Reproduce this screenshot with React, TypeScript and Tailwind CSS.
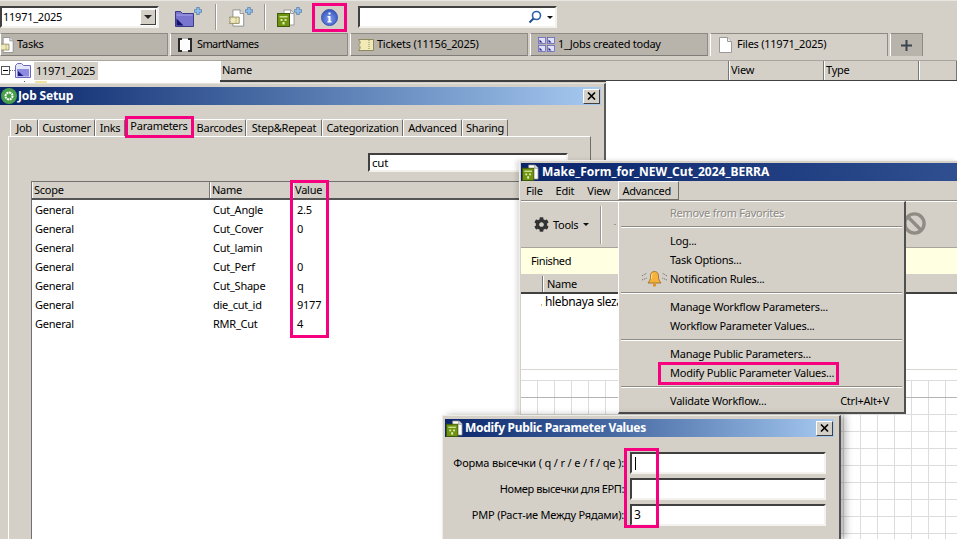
import { FaCog } from "react-icons/fa";

const raised = "border border-t-white border-l-white border-r-[#6f6d68] border-b-[#6f6d68]";
const sunken = "border-2 border-t-[#404040] border-l-[#404040] border-r-[#f4f2ee] border-b-[#f4f2ee]";
const titleText = "font-bold text-white text-[12px] whitespace-nowrap";

function GreenIcon({ className = "" }: { className?: string }) {
  return (
    <svg viewBox="0 0 18 18" className={className}>
      <path d="M7 1h7l3 3v12H7z" fill="#fff" stroke="#8a8a8a" strokeWidth="0.8" />
      <path d="M13.500 1v3.500H17" fill="#e6e6e6" stroke="#8a8a8a" strokeWidth="0.8" />
      <rect x="0.500" y="4.500" width="12" height="13" fill="#6f9412" stroke="#41590a" />
      <path d="M2.500 7h8v1.500h-8z" fill="#cfe090" />
      <rect x="3.500" y="10" width="2" height="2" fill="#d8e8a0" />
      <rect x="7.500" y="10" width="2" height="2" fill="#d8e8a0" />
      <rect x="5.500" y="13" width="2" height="2.500" fill="#e8f0c0" />
    </svg>
  );
}

function Plus({ className = "" }: { className?: string }) {
  return (
    <svg viewBox="0 0 9 9" className={className}>
      <path d="M3 0.400h3v2.600h2.600v3H6v2.600H3V6H0.400V3H3z" fill="#8fbce8" stroke="#3f6f9f" strokeWidth="0.7" />
    </svg>
  );
}

function FolderPlus() {
  return (
    <div className="relative w-[27px] h-[20px]">
      <svg viewBox="0 0 19 16" className="absolute left-0 bottom-0 w-[19px] h-[16px]">
        <path d="M0.500 0.500h5l2 2h11v13h-18z" fill="#7a76d0" stroke="#3d3a86" />
        <path d="M1.500 4h16" stroke="#a6a3ea" />
        <path d="M1.500 14.500V7.500l7 7z" fill="#14126a" />
      </svg>
      <Plus className="absolute right-0 top-0 w-[8px] h-[8px]" />
    </div>
  );
}

function TicketDoc({ className = "" }: { className?: string }) {
  return (
    <svg viewBox="0 0 18 20" className={className}>
      <path d="M5 1h8l4 4v14H5z" fill="#fff" stroke="#8a8a8a" />
      <path d="M13 1v4h4" fill="#e8e8e8" stroke="#8a8a8a" />
      <path d="M1 9h11v7H1l1-1.700v-1l-1-.8 1-.8v-1z" fill="#efe8b8" stroke="#8e8a60" />
      <path d="M8.500 10v5" stroke="#8e8a60" strokeDasharray="1 1" />
    </svg>
  );
}

function Ticket({ className = "" }: { className?: string }) {
  return (
    <svg viewBox="0 0 16 12" className={className}>
      <path d="M0.500 0.500h15v11h-15l1.500-2v-2l-1.500-1.500 1.500-1.500v-2z" fill="#f1eab6" stroke="#8e8a60" />
      <path d="M11 1v10" stroke="#8e8a60" strokeDasharray="1 1" />
    </svg>
  );
}

function JobsGrid({ className = "" }: { className?: string }) {
  const tile = (x: number, y: number) => (
    <g key={`${x}-${y}`}>
      <rect x={x} y={y} width="7" height="6" fill="#dfe2f6" stroke="#5a58b8" strokeWidth="0.7" />
      <path d={`M${x + 1} ${y + 5}v-3l3 3z`} fill="#24209a" />
    </g>
  );
  return (
    <svg viewBox="0 0 17 15" className={className}>
      {tile(0.5, 0.5)}
      {tile(9.5, 0.5)}
      {tile(0.5, 8.5)}
      {tile(9.5, 8.5)}
    </svg>
  );
}

const tabs = [
  { label: "Tasks", w: "w-[168px]", text: "", icon: <TicketDoc className="w-[15px] h-[18px] -ml-[2px] mr-[3px]" />, pl: "pl-0" },
  { label: "SmartNames", w: "w-[178px]", text: "tracking-[-0.6px]", icon: <svg viewBox="0 0 14 14" className="w-[14px] h-[14px] mr-[5px]"><rect x="1" y="1" width="12" height="12" fill="#fdfdfd" /><path d="M4 1H1v12h3M10 1h3v12h-3" fill="none" stroke="#2a2a2a" strokeWidth="2" /></svg>, pl: "pl-[7px]" },
  { label: "Tickets (11156_2025)", w: "w-[178px]", text: "", icon: <Ticket className="w-[16px] h-[12px] mr-[3px]" />, pl: "pl-[7px]" },
  { label: "1_Jobs created today", w: "w-[178px]", text: "", icon: <JobsGrid className="w-[17px] h-[15px] mr-[3px]" />, pl: "pl-[7px]" },
];

const headerCols = [
  { label: "Name", w: "w-[509px]" },
  { label: "View", w: "w-[95px]" },
  { label: "Type", w: "w-[95px]" },
  { label: "", w: "flex-1" },
];

const jobTabs = [
  { label: "Job", w: "w-[28px]" },
  { label: "Customer", w: "w-[57px]" },
  { label: "Inks", w: "w-[30px]" },
  { label: "Parameters", w: "w-[68px]", active: true },
  { label: "Barcodes", w: "w-[53px]" },
  { label: "Step&Repeat", w: "w-[76px]" },
  { label: "Categorization", w: "w-[81px]" },
  { label: "Advanced", w: "w-[59px]" },
  { label: "Sharing", w: "w-[46px]" },
];

const params = [
  ["General", "Cut_Angle", "2.5"],
  ["General", "Cut_Cover", "0"],
  ["General", "Cut_lamin", ""],
  ["General", "Cut_Perf", "0"],
  ["General", "Cut_Shape", "q"],
  ["General", "die_cut_id", "9177"],
  ["General", "RMR_Cut", "4"],
];

type MenuEntry = { label?: string; disabled?: boolean; bell?: boolean; shortcut?: string; sep?: boolean };
const menu: MenuEntry[] = [
  { label: "Remove from Favorites", disabled: true },
  { sep: true },
  { label: "Log..." },
  { label: "Task Options..." },
  { label: "Notification Rules...", bell: true },
  { sep: true },
  { label: "Manage Workflow Parameters..." },
  { label: "Workflow Parameter Values..." },
  { sep: true },
  { label: "Manage Public Parameters..." },
  { label: "Modify Public Parameter Values..." },
  { sep: true },
  { label: "Validate Workflow...", shortcut: "Ctrl+Alt+V" },
];

const formFields = [
  { label: "Форма высечки ( q / r / e / f / qe ):", value: "", caret: true, text: "tracking-[-0.15px]" },
  { label: "Номер высечки для ЕРП:", value: "", text: "tracking-[-0.4px]" },
  { label: "РМР (Раст-ие Между Рядами):", value: "3", text: "tracking-[-0.22px]" },
];

function CloseBtn() {
  return (
    <div className={`w-[17px] h-[15px] bg-[#d4d0c8] flex items-center justify-center ${raised} border-r-[#404040] border-b-[#404040]`}>
      <svg viewBox="0 0 9 8" className="w-[9px] h-[8px]">
        <path d="M1 0.500l7 7M8 0.500l-7 7" stroke="#000" strokeWidth="1.600" />
      </svg>
    </div>
  );
}

function Bell() {
  return (
    <svg viewBox="0 0 27 16" className="w-[27px] h-[16px]">
      <path d="M13.500 0.500c-3.500 0-4 3-4 5.500s-1 4-2.500 6h13c-1.500-2-2.500-3.500-2.500-6s-.5-5.500-4-5.500z" fill="#f6b23c" stroke="#8a5a10" strokeWidth="0.7" />
      <path d="M11.500 2.500c-1 1-.8 3-1 5" stroke="#ffe9a8" fill="none" />
      <circle cx="13.500" cy="14" r="1.700" fill="#e0902a" />
      <path d="M1 5l5-3M1 9l5-2M26 5l-5-3M26 9l-5-2" stroke="#444" strokeWidth="0.8" strokeDasharray="1 1" fill="none" />
    </svg>
  );
}

export default function App() {
  return (
    <div className="relative w-[957px] h-[539px] overflow-hidden bg-[#d4d0c8] text-black text-[11px] tracking-[-0.25px] leading-[14px] font-['Noto_Sans',sans-serif]">
      {/* Main toolbar */}
      <div className="h-[33px] flex items-center border-t border-[#e8e6e0]">
        <div className={`w-[159px] h-[22px] bg-white flex items-center justify-between pl-[1px] pr-[1px] ${sunken}`}>
          <span>11971_2025</span>
          <div className={`w-[16px] h-[16px] bg-[#d4d0c8] flex items-center justify-center ${raised} border-r-[#404040] border-b-[#404040]`}>
            <svg viewBox="0 0 8 4" className="w-[8px] h-[4px]"><path d="M0 0h8L4 4z" fill="#222" /></svg>
          </div>
        </div>
        <div className="ml-[16px]"><FolderPlus /></div>
        <div className="ml-[13px] w-[2px] h-[26px] border-l border-l-[#9a9790] border-r border-r-white" />
        <div className="ml-[11px] relative w-[25px] h-[20px]">
          <TicketDoc className="absolute left-0 bottom-0 w-[17px] h-[18px]" />
          <Plus className="absolute right-0 top-0 w-[8px] h-[8px]" />
        </div>
        <div className="ml-[11px] w-[2px] h-[26px] border-l border-l-[#9a9790] border-r border-r-white" />
        <div className="ml-[11px] relative w-[25px] h-[20px]">
          <GreenIcon className="absolute left-0 bottom-0 w-[18px] h-[18px]" />
          <Plus className="absolute right-0 top-0 w-[8px] h-[8px]" />
        </div>
        <div className="ml-[19px]">
          <svg viewBox="0 0 17 17" className="w-[17px] h-[17px]">
            <defs>
              <radialGradient id="infoG" cx="0.5" cy="0.6" r="0.6">
                <stop offset="0" stopColor="#7f9cf0" />
                <stop offset="1" stopColor="#3554b8" />
              </radialGradient>
            </defs>
            <circle cx="8.500" cy="8.500" r="8" fill="url(#infoG)" stroke="#3c5ab4" />
            <rect x="7.500" y="3.500" width="2" height="2" fill="#fff" />
            <path d="M6.500 7h3v5h1v1.500h-4V12h1V8.500h-1z" fill="#fff" />
          </svg>
        </div>
        <div className={`ml-[20px] w-[199px] h-[22px] bg-white flex items-center justify-end pr-[2px] ${sunken}`}>
          <svg viewBox="0 0 14 14" className="w-[14px] h-[14px]">
            <circle cx="8.500" cy="5.500" r="4" fill="none" stroke="#2b62a8" strokeWidth="1.600" />
            <path d="M5.500 8.500L1.500 12.500" stroke="#1f4f8f" strokeWidth="2" />
          </svg>
          <svg viewBox="0 0 6 3" className="w-[6px] h-[3px] ml-[5px]"><path d="M0 0h6L3 3z" fill="#111" /></svg>
        </div>
      </div>

      {/* Tabs */}
      <div className="h-[23px] flex gap-[2px]">
        {tabs.map((t) => (
          <div key={t.label} className={`${t.w} ${t.pl} h-[23px] bg-[#b8b4ac] flex items-center overflow-hidden border-t border-r border-b border-l border-t-[#8e8b85] border-r-[#8e8b85] border-b-[#807d78] border-l-white`}>
            {t.icon}
            <span className={`whitespace-nowrap pb-[2px] ${t.text}`}>{t.label}</span>
          </div>
        ))}
        <div className="w-[178px] h-[23px] pl-[8px] bg-[#d4d0c8] flex items-center border-t border-r border-l border-t-[#8e8b85] border-r-[#8e8b85] border-l-white">
          <svg viewBox="0 0 13 16" className="w-[13px] h-[16px] mr-[5px]">
            <path d="M0.500 0.500h8l4 4v11h-12z" fill="#fff" stroke="#9a9a9a" />
            <path d="M8.500 .5v4h4" fill="#eee" stroke="#9a9a9a" />
          </svg>
          <span className="whitespace-nowrap pb-[2px]">Files (11971_2025)</span>
        </div>
        <div className="w-[33px] h-[23px] bg-[#b8b4ac] flex items-center justify-center border-t border-r border-l border-t-[#8e8b85] border-r-[#8e8b85] border-l-white">
          <svg viewBox="0 0 11 11" className="w-[11px] h-[11px]"><path d="M4.500 0h2v4.500H11v2H6.500V11h-2V6.500H0v-2h4.500z" fill="#3c4450" /></svg>
        </div>
      </div>

      {/* Tree + list header */}
      <div className="mt-[4px] h-[23px] flex border-t border-[#a8a59e]">
        <div className="w-[220px] bg-white flex items-start pt-[1px] relative">
          <svg viewBox="0 0 34 16" className="w-[34px] h-[16px] mt-[1px]">
            <rect x="1.500" y="3.500" width="8" height="8" fill="#fff" stroke="#555" />
            <path d="M3 7.500h5" stroke="#000" />
            <path d="M10 7.500h5" stroke="#777" strokeDasharray="1 1" />
            <path d="M15.500 2.500l2-2h4l2 2h7v12h-15z" fill="#e2e4f8" stroke="#6a68c0" />
            <path d="M17 6h12v7.500H17z" fill="#8d8be0" />
            <path d="M18 13V8l5.500 5z" fill="#1c1a80" />
          </svg>
          <span className="h-[18px] w-[64px] bg-[#d4d0c8] pl-[2px] leading-[17px]">11971_2025</span>
          <span className="absolute left-[35px] top-[20px] w-[12px] h-[2px] bg-[#efe3a0]" />
          <span className="absolute left-[24px] top-[20px] w-[1px] h-[1px] bg-[#555]" />
        </div>
        <div className="flex-1 flex h-[19px] border-b-2 border-[#404040] box-content">
          {headerCols.map((c) => (
            <div key={c.w} className={`${c.w} pl-[1px] border-l border-l-white border-r border-r-[#777] leading-[18px]`}>{c.label}</div>
          ))}
        </div>
      </div>
      <div className="absolute left-[606px] top-[81px] right-0 bottom-0 bg-white" />

      {/* Job Setup window */}
      <div className="absolute left-0 top-[83px] w-[606px] h-[456px] bg-[#d4d0c8] border-t border-t-[#e4e2dc] border-r-2 border-r-[#5a5a5a] pt-[3px] flex flex-col">
        <div className="mr-[3px] h-[18px] flex items-center justify-between bg-gradient-to-r from-[#0a246a] to-[#a6caf0] pr-[1px]">
          <div className="flex items-center">
            <svg viewBox="0 0 16 16" className="w-[16px] h-[16px] ml-[1px] mr-[1px]">
              <circle cx="8" cy="8" r="8" fill="#4aa04a" />
              <circle cx="8" cy="8" r="3.500" fill="none" stroke="#fff" strokeWidth="2" strokeDasharray="2 0.700" />
            </svg>
            <span className={`${titleText} tracking-[-0.15px]`}>Job Setup</span>
          </div>
          <CloseBtn />
        </div>
        <div className="mt-[14px] pl-[10px] h-[17px] flex items-end">
          {jobTabs.map((t) => (
            <div
              key={t.label}
              className={`${t.w} ${t.active ? "h-[19px] pb-[3px]" : "h-[17px]"} flex items-center justify-center whitespace-nowrap border-t border-l border-r border-t-white border-l-white border-r-[#6f6d68] rounded-t-[2px]`}
            >
              {t.label}
            </div>
          ))}
        </div>
        <div className="ml-[8px] w-[583px] flex-1 flex flex-col border-t border-l border-r border-t-white border-l-white border-r-[#6f6d68]">
          <div className={`mt-[16px] ml-[359px] w-[200px] h-[19px] bg-white pl-[2px] leading-[15px] text-[11.500px] ${sunken}`}>cut</div>
          <div className="mt-[9px] ml-[22px] w-[550px] flex-1 bg-white border-t border-l border-t-[#707070] border-l-[#707070] flex flex-col">
            <div className="h-[16px] grid grid-cols-[178px_83px_1fr] bg-[#d4d0c8] border-b-2 border-[#555] box-content">
              {["Scope", "Name", "Value"].map((h) => (
                <div key={h} className="pl-[1px] leading-[16px] border-l border-l-white border-r border-r-[#777]">{h}</div>
              ))}
            </div>
            {params.map((r) => (
              <div key={r[1]} className="h-[19px] grid grid-cols-[178px_83px_1fr] items-center">
                <span className="pl-[3px]">{r[0]}</span>
                <span className="pl-[3px]">{r[1]}</span>
                <span className="pl-[4px]">{r[2]}</span>
              </div>
            ))}
          </div>
        </div>
      </div>

      {/* Make_Form window */}
      <div className="absolute left-[519px] top-[160px] w-[438px] h-[379px] bg-[#d4d0c8] border-t border-l border-t-[#f0eee8] border-l-[#f0eee8] pt-[2px] pl-[1px] flex flex-col shadow-[-3px_0_4px_rgba(0,0,0,0.12)]">
        <div className="h-[18px] shrink-0 flex items-center bg-gradient-to-r from-[#0a246a] to-[#2f4f90] pl-[1px]">
          <GreenIcon className="w-[17px] h-[17px] mr-[3px]" />
          <span className={`${titleText} tracking-[0.03px]`}>Make_Form_for_NEW_Cut_2024_BERRA</span>
        </div>
        <div className="h-[20px] shrink-0 flex items-center border-b border-[#8e8b85]">
          <span className="ml-[5px]">File</span>
          <span className="ml-[13px]">Edit</span>
          <span className="ml-[13px]">View</span>
          <span className={`ml-[8px] h-[19px] w-[61px] leading-[18px] pl-[3px] ${raised}`}>Advanced</span>
        </div>
        <div className="h-[46px] shrink-0 relative flex items-center border-t border-white">
          <FaCog className="ml-[13px] w-[15px] h-[15px] text-[#333]" />
          <span className="ml-[4px] tracking-[-0.3px]">Tools</span>
          <svg viewBox="0 0 6 3" className="w-[6px] h-[3px] ml-[5px]"><path d="M0 0h6L3 3z" fill="#111" /></svg>
          <div className="ml-[11px] w-[2px] h-[38px] border-l border-l-[#9a9790] border-r border-r-white" />
          <span className="ml-[12px] w-[2px] h-[1px] bg-[#999]" />
          <svg viewBox="0 0 24 24" className="absolute left-[382px] top-[10px] w-[23px] h-[23px]">
            <circle cx="12" cy="12" r="10" fill="none" stroke="#8f8c86" strokeWidth="3.500" />
            <path d="M5 5l14 14" stroke="#8f8c86" strokeWidth="3.500" />
          </svg>
        </div>
        <div className="h-[27px] shrink-0 bg-[#ffffe1] border-t border-[#a8a59e] pl-[10px] flex items-center tracking-[-0.4px]">Finished</div>
        <div className="h-[16px] shrink-0 mt-[1px] flex border-t border-b-2 border-t-[#d4d0c8] border-b-[#404040] box-content">
          <div className="w-[22px] border-r border-r-[#777]" />
          <div className="flex-1 pl-[3px] border-l border-l-white leading-[15px]">Name</div>
        </div>
        <div className="h-[75px] shrink-0 bg-white pl-[24px] relative">
          <span className="absolute left-[20px] top-[10px] w-[1px] h-[2px] bg-[#f0b060]" />
          <span className="text-[12px] tracking-[-0.35px] leading-[15px]">hlebnaya sleza</span>
        </div>
        <div className="h-[11px] shrink-0 bg-white border-t border-[#d9d7d2]" />
        <div className="flex-1 relative bg-white bg-[linear-gradient(to_right,#dcdcdc_1px,transparent_1px),linear-gradient(to_bottom,#dcdcdc_1px,transparent_1px)] bg-[size:17px_17px] bg-[position:16px_0px]">
          <div className="absolute left-0 right-0 top-[17px] h-[1px] bg-[#b4b4b4]" />
        </div>
      </div>

      {/* Advanced menu */}
      <div className="absolute left-[618px] top-[201px] w-[288px] pt-[1px] pb-[2px] px-[2px] bg-[#d4d0c8] border-t border-l border-t-white border-l-white border-r-2 border-b-2 border-r-[#505050] border-b-[#505050]">
        {menu.map((m, i) =>
          m.sep ? (
            <div key={i} className="h-[9px] flex items-center">
              <div className="w-full h-[2px] border-t border-t-[#8e8b85] border-b border-b-white" />
            </div>
          ) : (
            <div key={i} className={`relative h-[19px] flex items-center justify-between pl-[49px] pr-[13px] whitespace-nowrap ${m.disabled ? "text-[#8d8a84] [text-shadow:1px_1px_0_#fff]" : ""}`}>
              {m.bell && <span className="absolute left-[20px] top-[2px]"><Bell /></span>}
              <span>{m.label}</span>
              {m.shortcut && <span>{m.shortcut}</span>}
            </div>
          )
        )}
      </div>

      {/* Modify dialog */}
      <div className="absolute left-[442px] top-[415px] w-[399px] h-[124px] bg-[#d4d0c8] border-t border-l border-t-[#eeece6] border-l-[#eeece6] border-r-2 border-r-[#505050] pt-[3px] pl-[2px] shadow-[5px_0_7px_rgba(0,0,0,0.28)] flex flex-col">
        <div className="mr-[5px] h-[18px] flex items-center justify-between bg-gradient-to-r from-[#0a246a] to-[#a6caf0] pl-[1px] pr-[1px]">
          <div className="flex items-center">
            <GreenIcon className="w-[17px] h-[17px] mr-[2px]" />
            <span className={`${titleText} tracking-[-0.3px]`}>Modify Public Parameter Values</span>
          </div>
          <CloseBtn />
        </div>
        <div className="mt-[15px] flex flex-col gap-[4px] pl-[5px]">
          {formFields.map((f) => (
            <div key={f.label} className="flex items-center h-[22px]">
              <span className={`w-[178px] text-right whitespace-nowrap pr-[4px] ${f.text}`}>{f.label}</span>
              <div className={`ml-[2px] w-[196px] h-[22px] bg-white pl-[2px] flex items-center text-[12px] ${sunken}`}>
                {f.caret && <span className="ml-[1px] w-[1px] h-[13px] bg-black" />}
                {f.value}
              </div>
            </div>
          ))}
        </div>
      </div>

      {/* Pink annotation frames */}
      <div className="absolute left-[312px] top-[3px] w-[35px] h-[29px] border-[3px] border-[#f7007f]" />
      <div className="absolute left-[125px] top-[116px] w-[69px] h-[22px] border-[3px] border-[#f7007f]" />
      <div className="absolute left-[290px] top-[180px] w-[39px] h-[158px] border-[3px] border-[#f7007f]" />
      <div className="absolute left-[658px] top-[362px] w-[181px] h-[23px] border-[3px] border-[#f7007f]" />
      <div className="absolute left-[624px] top-[448px] w-[35px] h-[80px] border-[3px] border-[#f7007f]" />
    </div>
  );
}
